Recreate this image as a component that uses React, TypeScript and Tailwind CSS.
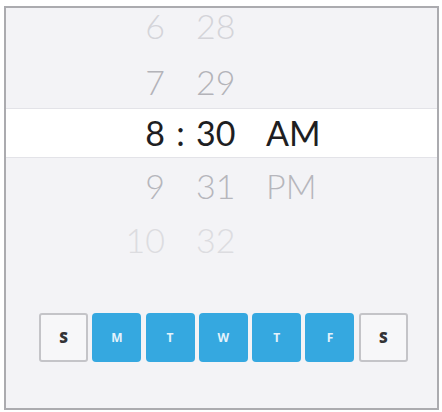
import React from "react";

type Row = {
  hour: string;
  minute: string;
  period: string;
  color: string;
  selected?: boolean;
  height: string;
  pad?: string;
};

const rows: Row[] = [
  { hour: "6", minute: "28", period: "", color: "text-[#d4d4d9]", height: "h-[47px]", pad: "pb-[12px]" },
  { hour: "7", minute: "29", period: "", color: "text-[#b3b3b9]", height: "h-[53px]" },
  { hour: "8", minute: "30", period: "AM", color: "text-[#1e1e22]", height: "h-[50px]", selected: true },
  { hour: "9", minute: "31", period: "PM", color: "text-[#b6b6bc]", height: "h-[55px]" },
  { hour: "10", minute: "32", period: "", color: "text-[#dcdce0]", height: "h-[53px]" },
];

const days = [
  { label: "S", on: false },
  { label: "M", on: true },
  { label: "T", on: true },
  { label: "W", on: true },
  { label: "T", on: true },
  { label: "F", on: true },
  { label: "S", on: false },
];

function WheelRow({ row }: { row: Row }) {
  return (
    <div
      className={`flex items-center ${row.height} ${row.pad ?? ""} ${row.color} ${
        row.selected ? "bg-white border-y border-[#e3e3e8] font-normal" : "font-light"
      }`}
    >
      <div className="w-[159px] text-right">{row.hour}</div>
      <div className="w-[31px] text-center">{row.selected ? ":" : ""}</div>
      <div className="w-[70px]">{row.minute}</div>
      <div>{row.period}</div>
    </div>
  );
}

export default function App() {
  return (
    <div className="w-[442px] h-[412px] bg-white pt-[6px] pl-[4px]">
      <div className="w-[435px] h-[404px] border-2 border-[#ababaf] bg-[#f3f3f6] flex flex-col">
        <div
          className="flex flex-col text-[34px] leading-none"
          style={{ fontFamily: "Lato, 'Open Sans', sans-serif" }}
        >
          {rows.map((r, i) => (
            <WheelRow key={i} row={r} />
          ))}
        </div>
        <div
          className="mt-[47px] pl-[33px] flex gap-[4.3px]"
          style={{ fontFamily: "'Open Sans', Lato, sans-serif" }}
        >
          {days.map((d, i) =>
            d.on ? (
              <div
                key={i}
                className="w-[49px] h-[49px] rounded-[4px] bg-[#35a8e0] flex items-center justify-center text-[12px] font-bold text-[#e4f2fb]"
              >
                {d.label}
              </div>
            ) : (
              <div
                key={i}
                className="w-[49px] h-[49px] rounded-[3px] border-2 border-[#c4c4c8] bg-[#f7f7f9] flex items-center justify-center text-[15px] font-extrabold text-[#333336]"
              >
                {d.label}
              </div>
            )
          )}
        </div>
      </div>
    </div>
  );
}
